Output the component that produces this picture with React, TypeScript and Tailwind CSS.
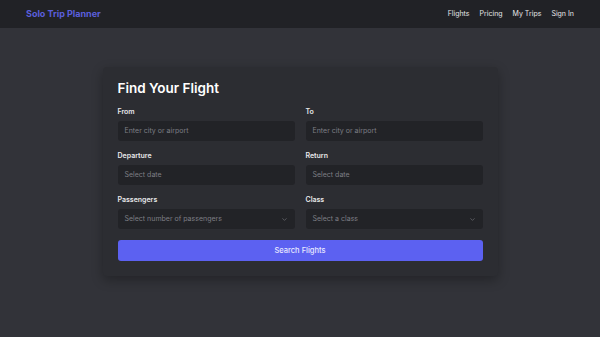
import { ChevronDown } from "lucide-react";

function Field(props: { label: string; placeholder: string; select?: boolean }) {
    const { label, placeholder, select } = props
    return (
        <div className="flex flex-col gap-[5px]">
            <span className="text-[7px] leading-[8px] font-semibold text-[#e8e8ea]">{label}</span>
            <div className="h-[20px] rounded-[3px] bg-[#222327] flex items-center justify-between px-[7px]">
                <span className="text-[7px] text-[#7d7e85]">{placeholder}</span>
                {select && <ChevronDown size={7} className="text-[#7d7e85]" />}
            </div>
        </div>
    )
}

export default function App() {
    return (
        <div className="w-[600px] h-[337px] bg-[#323339] flex flex-col" style={{ fontFamily: "Inter, 'Noto Sans', sans-serif" }}>
            <header className="h-[28px] bg-[#212226] flex items-center justify-between px-[26px]">
                <span className="text-[9px] font-bold text-[#5b5fdc]">Solo Trip Planner</span>
                <nav className="flex gap-[10px] text-[7px] text-[#e6e6e8]">
                    <span>Flights</span>
                    <span>Pricing</span>
                    <span>My Trips</span>
                    <span>Sign In</span>
                </nav>
            </header>
            <div className="flex justify-center pt-[39px]">
                <div className="w-[395px] bg-[#2c2d32] rounded-[4px] shadow-[0_4px_12px_rgba(0,0,0,0.3)] px-[15px] pt-[12px] pb-[15px]">
                    <h1 className="text-[13.5px] leading-[18px] font-semibold text-white mb-[11px]">Find Your Flight</h1>
                    <div className="grid grid-cols-2 gap-x-[11px] gap-y-[11px]">
                        <Field label="From" placeholder="Enter city or airport" />
                        <Field label="To" placeholder="Enter city or airport" />
                        <Field label="Departure" placeholder="Select date" />
                        <Field label="Return" placeholder="Select date" />
                        <Field label="Passengers" placeholder="Select number of passengers" select />
                        <Field label="Class" placeholder="Select a class" select />
                    </div>
                    <button className="mt-[11px] w-full h-[21px] rounded-[3px] bg-[#5c61f1] text-[7.5px] font-medium text-[#e8e9ff]">Search Flights</button>
                </div>
            </div>
        </div>
    )
}
